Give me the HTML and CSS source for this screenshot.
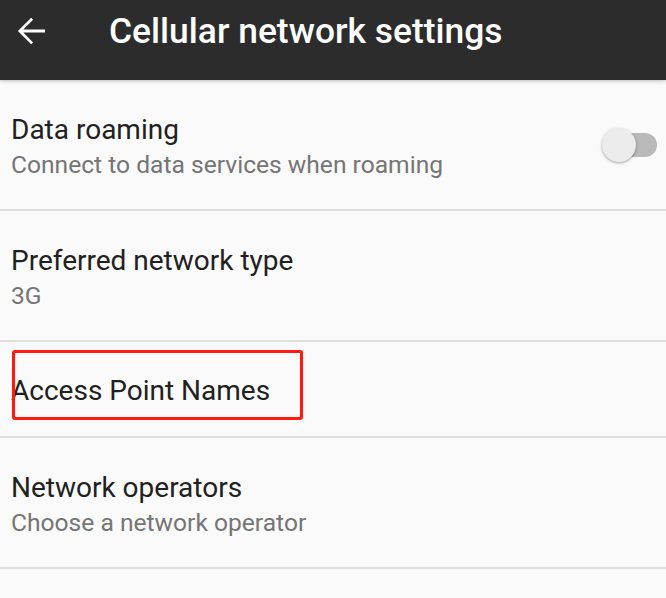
FILE: index.html
```html
<!DOCTYPE html>
<html>
<head>
<meta charset="utf-8">
<link rel="stylesheet" href="styles.css">
</head>
<body>
<header class="appbar">
  <svg class="back" width="42" height="42" viewBox="0 0 24 24"><path d="M20 11.1H7.6l5.6-5.6L12.1 4.4 4.5 12l7.6 7.6 1.1-1.1-5.6-5.6H20v-1.8z" fill="#fff"/></svg>
  <h1 class="title">Cellular network settings</h1>
</header>
<main class="list">
  <div class="row row-two">
    <div class="text">
      <div class="primary">Data roaming</div>
      <div class="secondary">Connect to data services when roaming</div>
    </div>
    <div class="switch"><div class="track"></div><div class="thumb"></div></div>
  </div>
  <div class="row row-two">
    <div class="text">
      <div class="primary">Preferred network type</div>
      <div class="secondary">3G</div>
    </div>
  </div>
  <div class="row row-one">
    <div class="text">
      <div class="primary">Access Point Names</div>
    </div>
    <div class="highlight"></div>
  </div>
  <div class="row row-two">
    <div class="text">
      <div class="primary">Network operators</div>
      <div class="secondary">Choose a network operator</div>
    </div>
  </div>
</main>
</body>
</html>
```
FILE: styles.css
```css
html, body {
  margin: 0;
  padding: 0;
}
body {
  width: 666px;
  height: 598px;
  overflow: hidden;
  background: #fafafa;
  font-family: Roboto, "Noto Sans", sans-serif;
}
.appbar {
  height: 80px;
  box-sizing: border-box;
  padding-bottom: 18px;
  background: #2c2c2c;
  display: flex;
  align-items: center;
  box-shadow: 0 1px 4px rgba(0,0,0,0.25);
  position: relative;
  z-index: 1;
}
.back {
  margin-left: 10px;
  width: 42px;
  height: 42px;
}
.title {
  margin: 0 0 0 57px;
  color: #ffffff;
  font-size: 35.4px;
  font-weight: 500;
  letter-spacing: 0;
}
.list {
  display: flex;
  flex-direction: column;
}
.row {
  display: flex;
  align-items: center;
  padding-left: 11px;
  border-bottom: 2px solid #dedede;
  position: relative;
}
.row-two {
  height: 129px;
}
.row-one {
  height: 94px;
}
.text {
  flex: 1;
  display: flex;
  flex-direction: column;
  padding-top: 4px;
}
.primary {
  font-size: 28px;
  color: #212121;
  line-height: 36px;
}
.secondary {
  font-size: 24.6px;
  color: #757575;
  line-height: 34px;
}
.switch {
  position: relative;
  width: 58px;
  height: 40px;
  margin-right: 8px;
}
.track {
  position: absolute;
  left: 3px;
  top: 8px;
  width: 54px;
  height: 24px;
  border-radius: 12px;
  background: #b9b9b9;
}
.thumb {
  position: absolute;
  left: 2px;
  top: 3px;
  width: 34px;
  height: 34px;
  border-radius: 50%;
  background: #ececec;
  box-shadow: 0 1px 3px rgba(0,0,0,0.35);
}
.highlight {
  position: absolute;
  left: 12px;
  top: 8px;
  width: 285px;
  height: 64px;
  border: 3px solid #ff1a10;
  border-radius: 3px;
}
```
